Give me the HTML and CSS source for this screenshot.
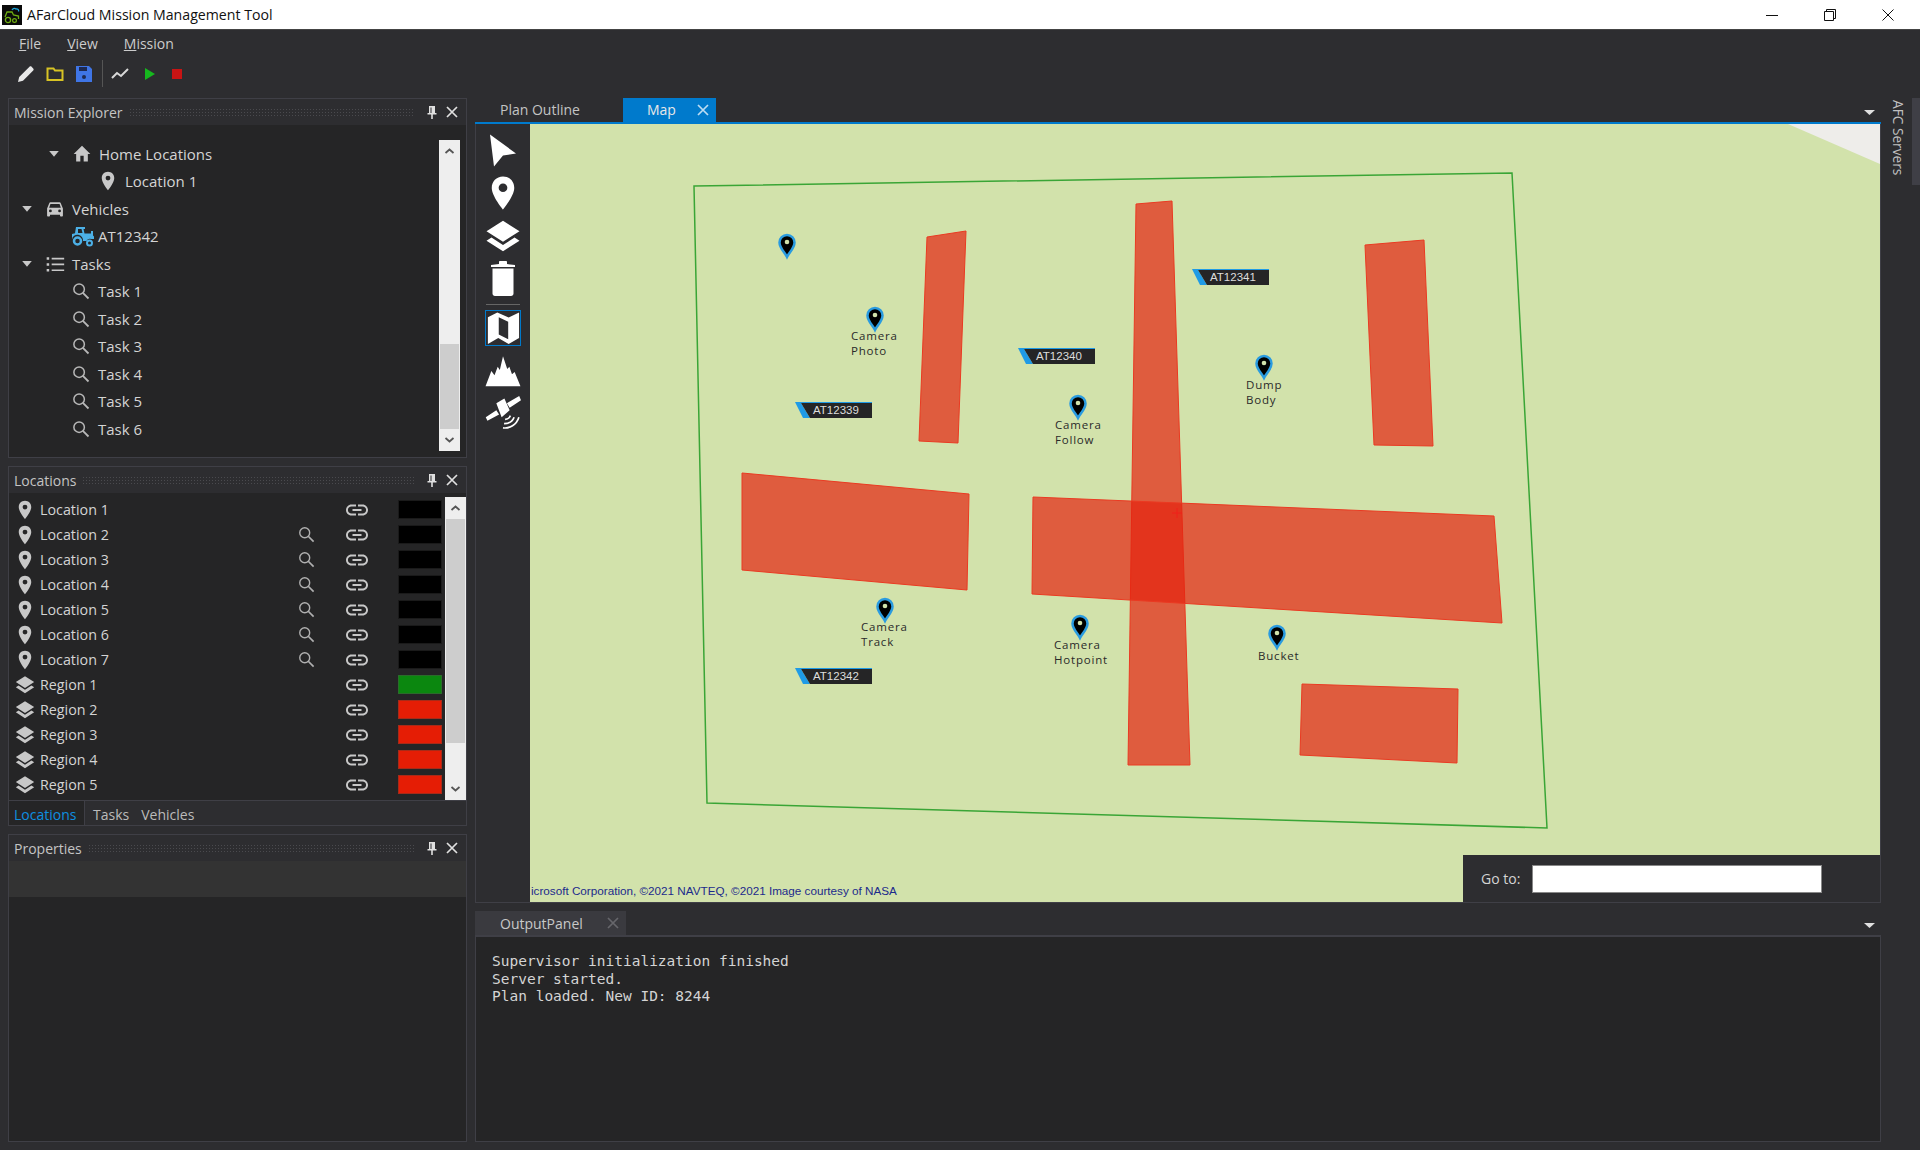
FILE: index.html
```html
<!DOCTYPE html>
<html lang="en">
<head>
  <meta charset="UTF-8">
  <title>AFarCloud Mission Management Tool</title>
  <link rel="stylesheet" href="styles.css">
</head>
<body>
  <svg class="icon-defs" width="0" height="0">
    <defs>
      <symbol id="i-pin" viewBox="0 0 24 24"><path d="M12 1C7.6 1 4.5 4.4 4.5 8.6 4.5 14 12 23 12 23s7.5-9 7.5-14.4C19.5 4.4 16.4 1 12 1zm0 10.4a2.9 2.9 0 1 1 0-5.800 2.9 2.9 0 0 1 0 5.800z"/></symbol>
      <symbol id="i-home" viewBox="0 0 24 24"><path d="M10 21v-7h4v7h5v-9h3L12 2 2 12h3v9z"/></symbol>
      <symbol id="i-car" viewBox="0 0 24 24"><path d="M18.9 5c-.2-.6-.8-1-1.4-1h-11c-.7 0-1.2.4-1.4 1L2.5 11.5V20c0 .6.4 1 1 1H5c.6 0 1-.4 1-1v-1h12v1c0 .6.4 1 1 1h1.500c.6 0 1-.4 1-1v-8.500zM6.500 16a1.700 1.700 0 1 1 0-3.400 1.700 1.700 0 0 1 0 3.400zm11 0a1.700 1.700 0 1 1 0-3.400 1.700 1.700 0 0 1 0 3.400zM5 10.500L6.500 6h11l1.500 4.500z"/></symbol>
      <symbol id="i-list" viewBox="0 0 24 24"><path d="M2 4h3v3H2zm0 7h3v3H2zm0 7h3v3H2zM8 4.500h15v2H8zm0 7h15v2H8zm0 7h15v2H8z"/></symbol>
      <symbol id="i-search" viewBox="0 0 24 24"><circle cx="9.500" cy="9.500" r="7" fill="none" stroke="currentColor" stroke-width="2"/><path d="M14.500 14.500l7.500 7.500" fill="none" stroke="currentColor" stroke-width="2.400"/></symbol>
      <symbol id="i-link" viewBox="0 0 24 24"><path d="M2.900 12c0-2 1.600-3.500 3.600-3.500H11v-2H6.500C3.400 6.500 1 9 1 12s2.400 5.500 5.500 5.500H11v-2H6.500c-2 0-3.600-1.500-3.600-3.500zM7.500 13h9v-2h-9zm10-6.500H13v2h4.500c2 0 3.600 1.500 3.600 3.500s-1.600 3.500-3.600 3.500H13v2h4.500c3.100 0 5.500-2.500 5.500-5.500s-2.400-5.500-5.500-5.500z"/></symbol>
      <symbol id="i-layers" viewBox="0 0 24 24"><path d="M12 1.500L23 8.500l-11 7-11-7zM4.300 12.700L12 17.600l7.700-4.900 3.300 2.100-11 7-11-7z"/></symbol>
      <symbol id="i-tractor" viewBox="0 0 24 24"><path d="M5 3h9v2h-1.500l1 4.500H20V7h2v4.500l1 1V15h-2.500a4 4 0 0 0-5 2H12a5.500 5.500 0 0 0-11-1.500V10l3-.8zm2 2v4h4.500l-1-4z"/><circle cx="6.500" cy="17" r="3.500" fill="none" stroke="currentColor" stroke-width="2.500"/><circle cx="18.500" cy="19" r="2.500" fill="none" stroke="currentColor" stroke-width="2"/></symbol>
      <symbol id="i-dock-pin" viewBox="0 0 12 14"><path d="M3 1h6v7h1.500v1.500H6.800V14H5.200V9.500H1.500V8H3zm1.500 1.500V8h1V2.500z"/></symbol>
      <symbol id="i-close" viewBox="0 0 12 12"><path d="M1 1l10 10M11 1L1 11" fill="none" stroke="currentColor" stroke-width="1.700"/></symbol>
      <symbol id="i-up" viewBox="0 0 10 6"><path d="M1 5l4-3.500L9 5" fill="none" stroke="#555" stroke-width="1.800"/></symbol>
      <symbol id="i-down" viewBox="0 0 10 6"><path d="M1 1l4 3.500L9 1" fill="none" stroke="#555" stroke-width="1.800"/></symbol>
      <symbol id="i-arrow" viewBox="0 0 28 34"><path d="M1 1l26 19-13 2-9 11z"/></symbol>
      <symbol id="i-trash" viewBox="0 0 26 36"><path d="M1 4.500l8-1v-2c0-.7.5-1 1-1h6c.5 0 1 .3 1 1v2l8 1v2H1zM2.500 8h21v25c0 1.500-1 2.500-2.500 2.500H5c-1.500 0-2.500-1-2.500-2.500z"/></symbol>
      <symbol id="i-map" viewBox="0 0 36 36"><path fill-rule="evenodd" d="M2 6.500L12 1.500 24 7 35 1.500V28.500L24 35 13 28.500 2 35zM13.500 6.500V25L23.500 30V11.500z"/></symbol>
      <symbol id="i-mountain" viewBox="0 0 34 30"><path d="M.5 29.500L6 15l3 4 3-8 2 3L17 1l4 12 2-2 2.500 7 2.500-2 5.500 13.500z"/></symbol>
      <symbol id="i-satellite" viewBox="0 0 34 32"><path d="M.7 20l10-6.700 2.600 4-11 6zM10.700 6.700l7.600-4.400 5 11L15.700 20zM20.700 6.700L32.300 0 34 4 23.300 11z"/><path d="M19 22c2 0 4-1 5-3.500M18 26c4 0 8-2 9.500-6M17 30c6 1 13-3 15-10" fill="none" stroke="currentColor" stroke-width="1.600"/></symbol>
    </defs>
  </svg>

  <header class="titlebar">
    <svg class="app-icon" viewBox="0 0 20 20">
      <rect width="20" height="20" fill="#0a0a0a"/>
      <path d="M3 12l2-5h5l1.500 3 5 1v3" fill="none" stroke="#6fae12" stroke-width="1.300"/>
      <circle cx="6" cy="15" r="2.600" fill="none" stroke="#6fae12" stroke-width="1.300"/>
      <circle cx="12.500" cy="15.500" r="1.900" fill="none" stroke="#6fae12" stroke-width="1.200"/>
      <path d="M10 5c1-2 3-2 4-1 2-.5 3 1 2.500 2.500" fill="none" stroke="#1ba3d8" stroke-width="1.300"/>
    </svg>
    <span class="app-title">AFarCloud Mission Management Tool</span>
    <div class="win-controls">
      <span class="win-btn"><svg width="12" height="12" viewBox="0 0 12 12"><path d="M0 6.500h12" stroke="#111" fill="none"/></svg></span>
      <span class="win-btn"><svg width="12" height="12" viewBox="0 0 12 12"><path d="M.5 2.500h9v9h-9zM2.500 2.500v-2h9v9h-2" stroke="#111" fill="none"/></svg></span>
      <span class="win-btn"><svg width="12" height="12" viewBox="0 0 12 12"><path d="M.5.500l11 11M11.500.500l-11 11" stroke="#111" fill="none"/></svg></span>
    </div>
  </header>

  <nav class="menubar">
    <span><u>F</u>ile</span>
    <span><u>V</u>iew</span>
    <span><u>M</u>ission</span>
  </nav>

  <div class="toolbar">
    <svg class="tb-icon" viewBox="0 0 18 18"><path d="M1 17l1.200-5L12.500 1.800c.6-.6 1.500-.6 2.100 0l1.600 1.600c.6.600.6 1.500 0 2.100L6 15.800z" fill="#e8e8e8"/></svg>
    <svg class="tb-icon" viewBox="0 0 18 18"><path d="M1.500 3.500h6l1.500 2h7.500v9.500h-15z" fill="none" stroke="#d8c324" stroke-width="2"/></svg>
    <svg class="tb-icon" viewBox="0 0 18 18"><path d="M1 1h13l3 3v13H1z" fill="#3f75e6"/><rect x="4" y="2" width="8" height="4" fill="#1e2a52"/><circle cx="9" cy="12" r="2" fill="#1e2a52"/></svg>
    <span class="tb-sep"></span>
    <svg class="tb-icon" viewBox="0 0 18 18"><path d="M1 13l5-5 4 3 7-7" fill="none" stroke="#d8d8d8" stroke-width="2"/></svg>
    <svg class="tb-icon tb-run" viewBox="0 0 18 18"><path d="M4 3l10 6-10 6z" fill="#16b81e"/></svg>
    <svg class="tb-icon" viewBox="0 0 18 18"><rect x="4" y="4" width="10" height="10" fill="#c81414"/></svg>
  </div>

  <div class="workspace">
    <aside class="left-dock">

      <section class="panel explorer">
        <div class="panel-head">
          <span class="panel-title">Mission Explorer</span>
          <span class="grip"></span>
          <svg class="head-icon"><use href="#i-dock-pin"/></svg>
          <svg class="head-close"><use href="#i-close"/></svg>
        </div>
        <div class="explorer-body">
          <ul class="tree">
            <li class="tree-row lvl1"><span class="caret"></span><svg class="ti"><use href="#i-home"/></svg>Home Locations</li>
            <li class="tree-row lvl2"><span class="caret blank"></span><svg class="ti"><use href="#i-pin"/></svg>Location 1</li>
            <li class="tree-row"><span class="caret"></span><svg class="ti"><use href="#i-car"/></svg>Vehicles</li>
            <li class="tree-row lvl1"><span class="caret blank"></span><svg class="ti tractor"><use href="#i-tractor"/></svg>AT12342</li>
            <li class="tree-row"><span class="caret"></span><svg class="ti"><use href="#i-list"/></svg>Tasks</li>
            <li class="tree-row lvl1"><span class="caret blank"></span><svg class="ti thin"><use href="#i-search"/></svg>Task 1</li>
            <li class="tree-row lvl1"><span class="caret blank"></span><svg class="ti thin"><use href="#i-search"/></svg>Task 2</li>
            <li class="tree-row lvl1"><span class="caret blank"></span><svg class="ti thin"><use href="#i-search"/></svg>Task 3</li>
            <li class="tree-row lvl1"><span class="caret blank"></span><svg class="ti thin"><use href="#i-search"/></svg>Task 4</li>
            <li class="tree-row lvl1"><span class="caret blank"></span><svg class="ti thin"><use href="#i-search"/></svg>Task 5</li>
            <li class="tree-row lvl1"><span class="caret blank"></span><svg class="ti thin"><use href="#i-search"/></svg>Task 6</li>
          </ul>
          <div class="scrollbar tree-scroll">
            <svg class="sb-btn"><use href="#i-up"/></svg>
            <div class="sb-track"><div class="sb-thumb"></div></div>
            <svg class="sb-btn"><use href="#i-down"/></svg>
          </div>
        </div>
      </section>

      <section class="panel locations">
        <div class="panel-head">
          <span class="panel-title">Locations</span>
          <span class="grip"></span>
          <svg class="head-icon"><use href="#i-dock-pin"/></svg>
          <svg class="head-close"><use href="#i-close"/></svg>
        </div>
        <div class="loc-body">
          <ul class="loc-list">
            <li class="loc-row"><svg class="li"><use href="#i-pin"/></svg><span class="loc-name">Location 1</span><span class="loc-search"></span><svg class="loc-link"><use href="#i-link"/></svg><span class="swatch"></span></li>
            <li class="loc-row"><svg class="li"><use href="#i-pin"/></svg><span class="loc-name">Location 2</span><svg class="loc-search"><use href="#i-search"/></svg><svg class="loc-link"><use href="#i-link"/></svg><span class="swatch"></span></li>
            <li class="loc-row"><svg class="li"><use href="#i-pin"/></svg><span class="loc-name">Location 3</span><svg class="loc-search"><use href="#i-search"/></svg><svg class="loc-link"><use href="#i-link"/></svg><span class="swatch"></span></li>
            <li class="loc-row"><svg class="li"><use href="#i-pin"/></svg><span class="loc-name">Location 4</span><svg class="loc-search"><use href="#i-search"/></svg><svg class="loc-link"><use href="#i-link"/></svg><span class="swatch"></span></li>
            <li class="loc-row"><svg class="li"><use href="#i-pin"/></svg><span class="loc-name">Location 5</span><svg class="loc-search"><use href="#i-search"/></svg><svg class="loc-link"><use href="#i-link"/></svg><span class="swatch"></span></li>
            <li class="loc-row"><svg class="li"><use href="#i-pin"/></svg><span class="loc-name">Location 6</span><svg class="loc-search"><use href="#i-search"/></svg><svg class="loc-link"><use href="#i-link"/></svg><span class="swatch"></span></li>
            <li class="loc-row"><svg class="li"><use href="#i-pin"/></svg><span class="loc-name">Location 7</span><svg class="loc-search"><use href="#i-search"/></svg><svg class="loc-link"><use href="#i-link"/></svg><span class="swatch"></span></li>
            <li class="loc-row"><svg class="li"><use href="#i-layers"/></svg><span class="loc-name">Region 1</span><span class="loc-search"></span><svg class="loc-link"><use href="#i-link"/></svg><span class="swatch green"></span></li>
            <li class="loc-row"><svg class="li"><use href="#i-layers"/></svg><span class="loc-name">Region 2</span><span class="loc-search"></span><svg class="loc-link"><use href="#i-link"/></svg><span class="swatch red"></span></li>
            <li class="loc-row"><svg class="li"><use href="#i-layers"/></svg><span class="loc-name">Region 3</span><span class="loc-search"></span><svg class="loc-link"><use href="#i-link"/></svg><span class="swatch red"></span></li>
            <li class="loc-row"><svg class="li"><use href="#i-layers"/></svg><span class="loc-name">Region 4</span><span class="loc-search"></span><svg class="loc-link"><use href="#i-link"/></svg><span class="swatch red"></span></li>
            <li class="loc-row"><svg class="li"><use href="#i-layers"/></svg><span class="loc-name">Region 5</span><span class="loc-search"></span><svg class="loc-link"><use href="#i-link"/></svg><span class="swatch red"></span></li>
            <li class="loc-row"><svg class="li"><use href="#i-layers"/></svg><span class="loc-name"></span><span class="loc-search"></span><span class="loc-link"></span><span class="swatch red"></span></li>
          </ul>
          <div class="scrollbar loc-scroll">
            <svg class="sb-btn"><use href="#i-up"/></svg>
            <div class="sb-track"><div class="sb-thumb"></div></div>
            <svg class="sb-btn"><use href="#i-down"/></svg>
          </div>
        </div>
        <div class="panel-tabs">
          <span class="ptab active">Locations</span>
          <span class="ptab">Tasks</span>
          <span class="ptab">Vehicles</span>
        </div>
      </section>

      <section class="panel properties">
        <div class="panel-head">
          <span class="panel-title">Properties</span>
          <span class="grip"></span>
          <svg class="head-icon"><use href="#i-dock-pin"/></svg>
          <svg class="head-close"><use href="#i-close"/></svg>
        </div>
        <div class="prop-band"></div>
      </section>
    </aside>

    <main class="center">
      <div class="doc-tabs">
        <span class="doc-tab">Plan Outline</span>
        <span class="doc-tab selected">Map<svg class="tab-close"><use href="#i-close"/></svg></span>
        <span class="tab-menu"></span>
      </div>

      <div class="map-section">
        <div class="map-tools">
          <svg class="tool tool-arrow"><use href="#i-arrow"/></svg>
          <svg class="tool tool-pin"><use href="#i-pin"/></svg>
          <svg class="tool tool-layers"><use href="#i-layers"/></svg>
          <svg class="tool tool-trash"><use href="#i-trash"/></svg>
          <span class="tool-sep"></span>
          <span class="tool-selected"><svg class="tool-map"><use href="#i-map"/></svg></span>
          <svg class="tool tool-mountain"><use href="#i-mountain"/></svg>
          <svg class="tool tool-sat"><use href="#i-satellite"/></svg>
        </div>
        <div class="map-view">
          <svg class="map-canvas" viewBox="530 124 1350 778">
            <defs>
              <g id="map-pin">
                <path class="pin-glow" d="M0 22C-2.500 17-7.500 13-7.500 7.500a7.500 7.500 0 0 1 15 0C7.500 13 2.500 17 0 22z"/>
                <circle class="pin-dot" cx="0" cy="7" r="2.300"/>
              </g>
              <g id="tag-shape">
                <path class="tag-blue" d="M0 0H77V1H6L15 16H8z"/>
                <path class="tag-dark" d="M6 1H77V16H15z"/>
              </g>
            </defs>
            <polygon class="corner" points="1788,124 1880,124 1880,164"/>
            <polygon class="zone" points="694,186 1512,173 1547,828 707,803"/>
            <polygon class="block" points="927,237 966,231 958,443 919,441"/>
            <polygon class="block" points="1136,204 1172,201 1190,765 1128,765"/>
            <polygon class="block" points="1365,245 1424,240 1433,446 1374,445"/>
            <polygon class="block" points="742,473 969,494 967,590 742,570"/>
            <polygon class="block" points="1033,497 1494,516 1502,623 1032,594"/>
            <polygon class="block" points="1302,684 1458,689 1457,763 1300,755"/>
            <path class="cross" d="M1172 513h10M1177 508v10"/>

            <use href="#map-pin" x="787" y="235"/>
            <use href="#map-pin" x="875" y="308"/>
            <use href="#map-pin" x="1078" y="396"/>
            <use href="#map-pin" x="1264" y="356"/>
            <use href="#map-pin" x="885" y="599"/>
            <use href="#map-pin" x="1080" y="616"/>
            <use href="#map-pin" x="1277" y="626"/>

            <text class="pin-label" x="851" y="340">Camera</text>
            <text class="pin-label" x="851" y="355">Photo</text>
            <text class="pin-label" x="1055" y="429">Camera</text>
            <text class="pin-label" x="1055" y="444">Follow</text>
            <text class="pin-label" x="1246" y="389">Dump</text>
            <text class="pin-label" x="1246" y="404">Body</text>
            <text class="pin-label" x="861" y="631">Camera</text>
            <text class="pin-label" x="861" y="646">Track</text>
            <text class="pin-label" x="1054" y="649">Camera</text>
            <text class="pin-label" x="1054" y="664">Hotpoint</text>
            <text class="pin-label" x="1258" y="660">Bucket</text>

            <use href="#tag-shape" x="1192" y="269"/><text class="tag-text" x="1210" y="281">AT12341</text>
            <use href="#tag-shape" x="1018" y="348"/><text class="tag-text" x="1036" y="360">AT12340</text>
            <use href="#tag-shape" x="795" y="402"/><text class="tag-text" x="813" y="414">AT12339</text>
            <use href="#tag-shape" x="795" y="668"/><text class="tag-text" x="813" y="680">AT12342</text>

            <text class="copyright" x="531" y="895">icrosoft Corporation, &#169;2021 NAVTEQ, &#169;2021 Image courtesy of NASA</text>
          </svg>
          <div class="goto">
            <label class="goto-label" for="goto-input">Go to:</label>
            <input class="goto-input" id="goto-input" type="text">
          </div>
        </div>
      </div>

      <div class="output-tabs">
        <span class="output-tab">OutputPanel<svg class="tab-close dim"><use href="#i-close"/></svg></span>
        <span class="tab-menu"></span>
      </div>
      <pre class="output-body">Supervisor initialization finished
Server started.
Plan loaded. New ID: 8244</pre>
    </main>

    <div class="side-strip">
      <span class="side-label">AFC Servers</span>
      <span class="side-bar"></span>
    </div>
  </div>
</body>
</html>
```
FILE: styles.css
```css
* {
  box-sizing: border-box;
}

html, body {
  margin: 0;
  padding: 0;
  height: 100%;
}

body {
  display: flex;
  flex-direction: column;
  height: 1150px;
  overflow: hidden;
  background: #2d2d30;
  color: #d4d4d4;
  font-family: "Open Sans", "Noto Sans", sans-serif;
  font-size: 14px;
}

.icon-defs {
  position: absolute;
}

svg {
  fill: currentColor;
}

/* window title */
.titlebar {
  display: flex;
  align-items: center;
  height: 30px;
  flex: none;
  padding-left: 2px;
  background: #fff;
  border-bottom: 1px solid #444;
  color: #111;
}

.app-icon {
  width: 20px;
  height: 20px;
  margin-right: 5px;
}

.app-title {
  font-size: 14.15px;
}

.win-controls {
  display: flex;
  margin-left: auto;
  padding-right: 3px;
}

.win-btn {
  display: flex;
  justify-content: center;
  width: 58px;
}

/* menu and toolbar */
.menubar {
  display: flex;
  flex: none;
  gap: 26px;
  align-items: center;
  height: 27px;
  padding-left: 19px;
  color: #ccc;
}

.toolbar {
  display: flex;
  flex: none;
  align-items: center;
  gap: 11px;
  height: 33px;
  padding-left: 17px;
  margin-bottom: 8px;
}

.tb-icon {
  width: 18px;
  height: 18px;
}

.tb-sep {
  width: 1px;
  height: 27px;
  margin: 0 -3px 0 -2px;
  background: #555;
}

.tb-run {
  margin-left: 1px;
  margin-right: -2px;
}

/* main area */
.workspace {
  display: flex;
  flex: 1;
  min-height: 0;
  padding: 0 0 8px 8px;
}

.left-dock {
  display: flex;
  flex-direction: column;
  gap: 8px;
  width: 459px;
  flex: none;
}

.panel {
  display: flex;
  flex-direction: column;
  border: 1px solid #3f3f46;
  background: #252526;
}

.panel-head {
  display: flex;
  align-items: center;
  flex: none;
  height: 26px;
  padding: 0 8px 0 5px;
  background: #2d2d30;
}

.panel-title {
  color: #c4c4c4;
}

.grip {
  flex: 1;
  height: 8px;
  margin: 0 12px 0 6px;
  background-image: radial-gradient(#4a4a4e 0.8px, transparent 1px);
  background-size: 3px 3px;
}

.head-icon {
  width: 12px;
  height: 14px;
  margin-right: 8px;
  color: #e0e0e0;
}

.head-close {
  width: 12px;
  height: 12px;
  color: #e0e0e0;
}

/* mission explorer */
.explorer {
  height: 360px;
  flex: none;
}

.explorer-body {
  display: flex;
  flex: 1;
  min-height: 0;
}

.tree {
  flex: 1;
  margin: 0;
  padding: 15px 0 0 13px;
  list-style: none;
  font-size: 15px;
}

.tree-row {
  display: flex;
  align-items: center;
  height: 27.5px;
}

.lvl1 {
  padding-left: 27px;
}

.lvl2 {
  padding-left: 53px;
}

.caret {
  width: 10px;
  height: 6px;
  margin-right: 14px;
  background: #c8c8c8;
  clip-path: polygon(0 0, 100% 0, 50% 100%);
}

.caret.blank {
  background: none;
}

.ti {
  width: 20px;
  height: 20px;
  margin: 0 7px 0 -1px;
  color: #c8c8c8;
}

.ti.thin {
  width: 18px;
  height: 18px;
  margin: 0 8px 0 -1px;
  color: #b8b8b8;
}

.ti.tractor {
  width: 24px;
  height: 24px;
  margin: 0 3px 0 -2px;
  color: #4cb0e6;
}

.scrollbar {
  display: flex;
  flex-direction: column;
  flex: none;
  width: 21px;
  background: #eee;
}

.sb-btn {
  width: 21px;
  height: 22px;
  flex: none;
  padding: 8px 5px;
}

.sb-track {
  display: flex;
  flex: 1;
  padding: 0 1px;
}

.sb-thumb {
  width: 100%;
  background: #cdcdcd;
}

.tree-scroll {
  height: 311px;
  margin: 15px 6px 0 0;
}

.tree-scroll .sb-track {
  align-items: flex-end;
}

.tree-scroll .sb-thumb {
  height: 85px;
}

/* locations */
.locations {
  height: 360px;
  flex: none;
}

.loc-body {
  display: flex;
  flex: 1;
  min-height: 0;
  padding-top: 4px;
}

.loc-list {
  flex: 1;
  margin: 0;
  padding: 0;
  list-style: none;
  overflow: hidden;
  font-size: 14.3px;
}

.loc-row {
  display: flex;
  align-items: center;
  height: 25px;
  padding-left: 6px;
}

.li {
  width: 20px;
  height: 20px;
  margin-right: 5px;
  color: #c8c8c8;
}

.loc-name {
  width: 258px;
}

.loc-search {
  width: 17px;
  height: 17px;
  margin-right: 30px;
  color: #b0b0b0;
}

.loc-link {
  width: 24px;
  height: 24px;
  margin-right: 29px;
  color: #c8c8c8;
}

.swatch {
  width: 44px;
  height: 19px;
  background: #000;
  border: 1px solid #1a1a1a;
}

.swatch.green {
  background: #0b870f;
  border-color: #2b6b2b;
}

.swatch.red {
  background: #e51d05;
  border-color: #a82a18;
}

.loc-scroll .sb-thumb {
  height: 224px;
}

.panel-tabs {
  display: flex;
  flex: none;
  height: 25px;
  background: #2d2d30;
  border-top: 1px solid #3f3f46;
}

.ptab {
  padding: 0 6px 0 5px;
  line-height: 27px;
  color: #bbb;
}

.ptab.active {
  width: 76px;
  margin-right: 2px;
  background: #252526;
  color: #0e8fe0;
  border-right: 1px solid #3f3f46;
}

.ptab + .ptab {
  padding-left: 6px;
}

/* properties */
.properties {
  flex: 1;
  min-height: 0;
}

.prop-band {
  height: 36px;
  background: #333;
}

/* center documents */
.center {
  display: flex;
  flex-direction: column;
  flex: none;
  width: 1406px;
  margin-left: 8px;
}

.doc-tabs {
  display: flex;
  flex: none;
  align-items: stretch;
  height: 26px;
  border-bottom: 2px solid #007acc;
}

.doc-tab {
  display: flex;
  align-items: center;
  width: 148px;
  padding-left: 25px;
  padding-bottom: 1px;
  color: #c4c4c4;
}

.doc-tab.selected {
  width: 93px;
  padding-left: 24px;
  background: #007acc;
  color: #e8e8e8;
}

.tab-close {
  width: 12px;
  height: 12px;
  margin-left: auto;
  margin-right: 7px;
  color: #bcdcf2;
}

.tab-close.dim {
  color: #66666b;
}

.tab-menu {
  width: 11px;
  height: 5px;
  margin: auto 6px 7px auto;
  background: #e0e0e0;
  clip-path: polygon(0 0, 100% 0, 50% 100%);
}

.map-section {
  display: flex;
  flex: none;
  height: 779px;
  border-left: 1px solid #3f3f46;
  border-right: 1px solid #3f3f46;
  border-bottom: 1px solid #3f3f46;
}

.map-tools {
  display: flex;
  flex-direction: column;
  align-items: center;
  flex: none;
  width: 54px;
  padding-top: 5px;
  color: #fff;
}

.tool {
  width: 36px;
  height: 43px;
}

.tool-arrow {
  width: 28px;
}

.tool-pin {
  height: 36px;
  margin: 3px 0 4px;
}

.tool-trash {
  width: 26px;
  margin-top: -1px;
}

.tool-mountain,
.tool-sat {
  height: 42px;
}

.tool-mountain {
  margin-top: 4px;
}

.tool-sep {
  width: 34px;
  height: 1px;
  margin: 4px 0 5px;
  background: #666;
}

.tool-selected {
  display: flex;
  width: 36px;
  height: 36px;
  border: 1px solid #007acc;
}

.tool-map {
  width: 100%;
  height: 100%;
}

.map-view {
  position: relative;
  flex: 1;
  background: #d2e2ab;
}

.map-canvas {
  display: block;
  width: 100%;
  height: 100%;
}

.corner {
  fill: #eeedea;
}

.zone {
  fill: none;
  stroke: #3aa536;
  stroke-width: 1.5;
}

.block {
  fill: rgba(228, 36, 16, 0.7);
  stroke: #ea3a22;
  stroke-width: 1;
}

.cross {
  fill: none;
  stroke: #f0201a;
}

.pin-glow {
  fill: #000;
  stroke: #2a9be0;
  stroke-width: 2.5;
}

.pin-dot {
  fill: #d2e2ab;
}

.pin-label {
  fill: #2a2a2a;
  font-size: 11.5px;
  letter-spacing: 0.8px;
}

.tag-blue {
  fill: #1f9be6;
}

.tag-dark {
  fill: #252526;
}

.tag-text {
  fill: #ddd;
  font-family: "Liberation Sans", sans-serif;
  font-size: 11.5px;
}

.copyright {
  fill: #1c2a8c;
  font-family: "Liberation Sans", sans-serif;
  font-size: 11.7px;
}

.goto {
  position: absolute;
  right: 0;
  bottom: 0;
  display: flex;
  align-items: center;
  width: 417px;
  height: 47px;
  padding-left: 18px;
  background: #2d2d30;
}

.goto-label {
  width: 51px;
  color: #d4d4d4;
}

.goto-input {
  width: 290px;
  height: 28px;
  background: #fff;
  border: 1px solid #888;
}

/* output */
.output-tabs {
  display: flex;
  flex: none;
  height: 34px;
  padding-top: 8px;
  border-bottom: 2px solid #3f3f46;
}

.output-tab {
  display: flex;
  align-items: center;
  width: 151px;
  padding-left: 25px;
  background: #3a3a3f;
  color: #c8c8c8;
}

.output-body {
  flex: 1;
  margin: 0;
  padding: 16px;
  background: #252526;
  border: 1px solid #3f3f46;
  border-top: 0;
  font-family: "DejaVu Sans Mono", monospace;
  font-size: 14.5px;
  line-height: 17.5px;
  color: #d4d4d4;
}

/* right strip */
.side-strip {
  display: flex;
  flex: 1;
}

.side-label {
  margin: 2px 0 0 8px;
  height: 80px;
  writing-mode: vertical-rl;
  font-size: 13.7px;
  color: #c0c0c0;
}

.side-bar {
  width: 8px;
  height: 87px;
  margin-left: auto;
  background: #3f3f46;
}
```
